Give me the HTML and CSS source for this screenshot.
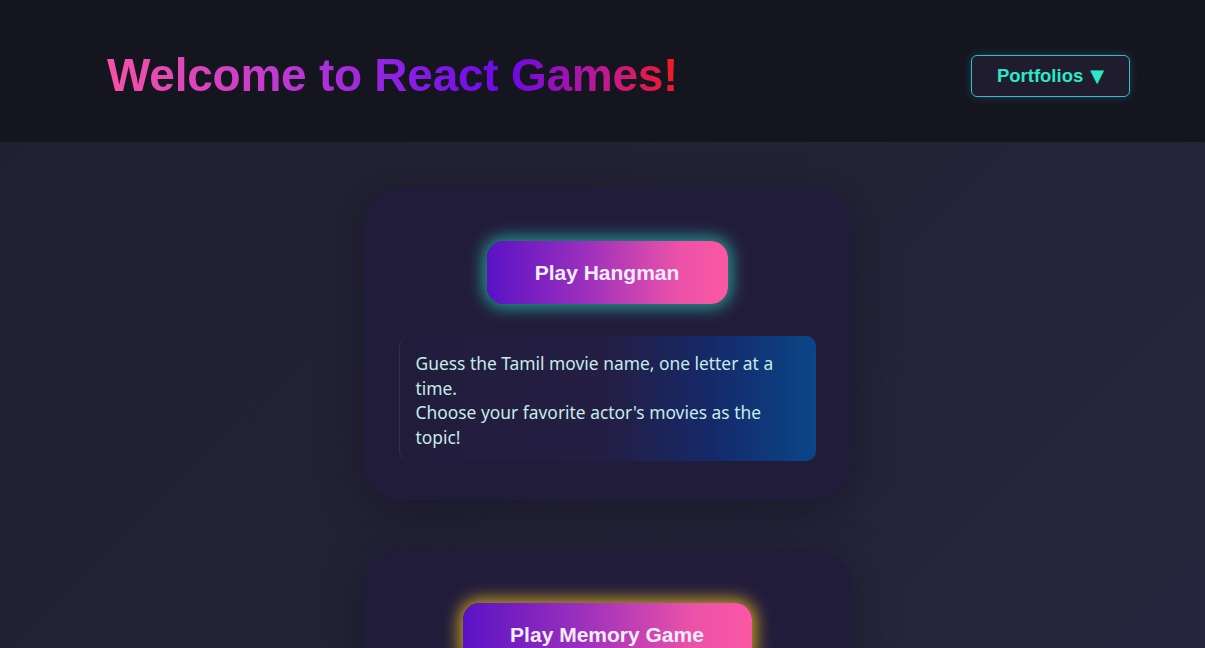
FILE: index.html
```html
<!DOCTYPE html>
<html lang="en">
<head>
<meta charset="utf-8">
<title>React Games</title>
<link rel="stylesheet" href="styles.css">
</head>
<body>
<header class="topbar">
  <h1 class="title">Welcome to React Games!</h1>
  <button class="portfolios">Portfolios <span class="arrow">▼</span></button>
</header>
<main class="games">
  <section class="card">
    <button class="play play-teal">Play Hangman</button>
    <div class="desc">
      <p>Guess the Tamil movie name, one letter at a time.</p>
      <p>Choose your favorite actor's movies as the topic!</p>
    </div>
  </section>
  <section class="card">
    <button class="play play-gold">Play Memory Game</button>
    <div class="desc">
      <p>Flip the cards and match the pairs.</p>
      <p>Test your memory with fun themes!</p>
    </div>
  </section>
</main>
</body>
</html>
```
FILE: styles.css
```css
* { box-sizing: border-box; }
html, body { margin: 0; padding: 0; }
body {
  min-height: 100vh;
  background: linear-gradient(135deg, #20202f 0%, #242438 60%, #28263f 100%);
  font-family: "Liberation Sans", Arial, sans-serif;
  overflow: hidden;
}
.topbar {
  height: 142px;
  background: #15151f;
  display: flex;
  align-items: center;
  justify-content: space-between;
  padding: 0 75px 0 107px;
}
.title {
  margin: 0;
  font-size: 46px;
  font-weight: 700;
  letter-spacing: -0.25px;
  background: linear-gradient(90deg, #f652a4 0%, #c03ad0 30%, #8b1fe6 52%, #6a08e8 70%, #c41a8a 88%, #f01c22 100%);
  -webkit-background-clip: text;
  background-clip: text;
  color: transparent;
  padding-top: 8px;
}
.portfolios {
  width: 159px;
  height: 42px;
  background: #1f1c2e;
  border: 1px solid #3ab8d4;
  border-radius: 6px;
  color: #2ce8c9;
  font-family: "Liberation Sans", Arial, sans-serif;
  font-size: 18.5px;
  font-weight: 700;
  box-shadow: 0 0 10px rgba(40, 200, 220, 0.25);
  margin-top: 10px;
  display: flex;
  align-items: center;
  justify-content: center;
  gap: 7px;
}
.arrow {
  font-family: "DejaVu Sans", sans-serif;
  font-size: 18px;
  line-height: 1;
}
.games {
  display: flex;
  flex-direction: column;
  align-items: center;
  gap: 50px;
  padding-top: 46px;
  padding-left: 9px;
}
.card {
  width: 487px;
  background: #221c3b;
  border-radius: 36px;
  padding: 53px 35px 39px;
  display: flex;
  flex-direction: column;
  align-items: center;
  box-shadow: 0 10px 40px rgba(18, 16, 32, 0.55);
}
.play {
  border: none;
  border-radius: 17px;
  height: 63px;
  padding: 0 44px;
  min-width: 241px;
  background: linear-gradient(90deg, #5a12c6 0%, #9a2fbd 40%, #ec52a9 80%, #fb58a3 100%);
  color: #f4ecff;
  font-family: "Liberation Sans", Arial, sans-serif;
  font-size: 21px;
  font-weight: 700;
}
.play-teal { box-shadow: 0 0 16px 4px rgba(40, 190, 170, 0.75); }
.play-gold { box-shadow: 0 0 16px 4px rgba(220, 180, 30, 0.85); min-width: 289px; }
.desc {
  margin-top: 32px;
  width: 417px;
  border-radius: 10px;
  border-left: 1px solid #2e2c5a;
  background: linear-gradient(90deg, #221c3b 0%, #241e44 50%, #15296a 75%, #0a4688 100%);
  padding: 15px 28px 12px 16px;
  color: #c5ece8;
  font-family: "Noto Sans", "Open Sans", sans-serif;
  font-size: 17.4px;
  line-height: 24.5px;
}
.desc p { margin: 0; }
```
